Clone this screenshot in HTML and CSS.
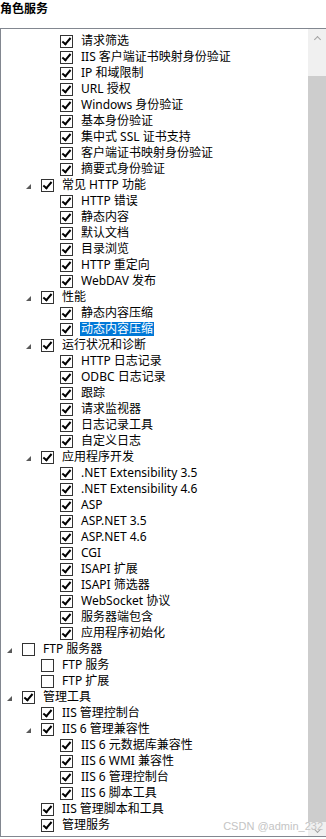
FILE: index.html
```html
<!DOCTYPE html>
<html>
 <head>
  <meta charset="utf-8">
  <link rel="stylesheet" href="styles.css">
 </head>
 <body>
  <div class="title">角色服务</div>
  <div class="box">
   <ul class="tree">
    <li class="row l3"><span class="cb on"></span><span class="lbl">请求筛选</span></li>
    <li class="row l3"><span class="cb on"></span><span class="lbl">IIS 客户端证书映射身份验证</span></li>
    <li class="row l3"><span class="cb on"></span><span class="lbl">IP 和域限制</span></li>
    <li class="row l3"><span class="cb on"></span><span class="lbl">URL 授权</span></li>
    <li class="row l3"><span class="cb on"></span><span class="lbl">Windows 身份验证</span></li>
    <li class="row l3"><span class="cb on"></span><span class="lbl">基本身份验证</span></li>
    <li class="row l3"><span class="cb on"></span><span class="lbl">集中式 SSL 证书支持</span></li>
    <li class="row l3"><span class="cb on"></span><span class="lbl">客户端证书映射身份验证</span></li>
    <li class="row l3"><span class="cb on"></span><span class="lbl">摘要式身份验证</span></li>
    <li class="row l2"><span class="tw"></span><span class="cb on"></span><span class="lbl">常见 HTTP 功能</span></li>
    <li class="row l3"><span class="cb on"></span><span class="lbl">HTTP 错误</span></li>
    <li class="row l3"><span class="cb on"></span><span class="lbl">静态内容</span></li>
    <li class="row l3"><span class="cb on"></span><span class="lbl">默认文档</span></li>
    <li class="row l3"><span class="cb on"></span><span class="lbl">目录浏览</span></li>
    <li class="row l3"><span class="cb on"></span><span class="lbl">HTTP 重定向</span></li>
    <li class="row l3"><span class="cb on"></span><span class="lbl">WebDAV 发布</span></li>
    <li class="row l2"><span class="tw"></span><span class="cb on"></span><span class="lbl">性能</span></li>
    <li class="row l3"><span class="cb on"></span><span class="lbl">静态内容压缩</span></li>
    <li class="row l3"><span class="cb on"></span><span class="lbl sel">动态内容压缩</span></li>
    <li class="row l2"><span class="tw"></span><span class="cb on"></span><span class="lbl">运行状况和诊断</span></li>
    <li class="row l3"><span class="cb on"></span><span class="lbl">HTTP 日志记录</span></li>
    <li class="row l3"><span class="cb on"></span><span class="lbl">ODBC 日志记录</span></li>
    <li class="row l3"><span class="cb on"></span><span class="lbl">跟踪</span></li>
    <li class="row l3"><span class="cb on"></span><span class="lbl">请求监视器</span></li>
    <li class="row l3"><span class="cb on"></span><span class="lbl">日志记录工具</span></li>
    <li class="row l3"><span class="cb on"></span><span class="lbl">自定义日志</span></li>
    <li class="row l2"><span class="tw"></span><span class="cb on"></span><span class="lbl">应用程序开发</span></li>
    <li class="row l3"><span class="cb on"></span><span class="lbl">.NET Extensibility 3.5</span></li>
    <li class="row l3"><span class="cb on"></span><span class="lbl">.NET Extensibility 4.6</span></li>
    <li class="row l3"><span class="cb on"></span><span class="lbl">ASP</span></li>
    <li class="row l3"><span class="cb on"></span><span class="lbl">ASP.NET 3.5</span></li>
    <li class="row l3"><span class="cb on"></span><span class="lbl">ASP.NET 4.6</span></li>
    <li class="row l3"><span class="cb on"></span><span class="lbl">CGI</span></li>
    <li class="row l3"><span class="cb on"></span><span class="lbl">ISAPI 扩展</span></li>
    <li class="row l3"><span class="cb on"></span><span class="lbl">ISAPI 筛选器</span></li>
    <li class="row l3"><span class="cb on"></span><span class="lbl">WebSocket 协议</span></li>
    <li class="row l3"><span class="cb on"></span><span class="lbl">服务器端包含</span></li>
    <li class="row l3"><span class="cb on"></span><span class="lbl">应用程序初始化</span></li>
    <li class="row l1"><span class="tw"></span><span class="cb"></span><span class="lbl">FTP 服务器</span></li>
    <li class="row l2"><span class="cb"></span><span class="lbl">FTP 服务</span></li>
    <li class="row l2"><span class="cb"></span><span class="lbl">FTP 扩展</span></li>
    <li class="row l1"><span class="tw"></span><span class="cb on"></span><span class="lbl">管理工具</span></li>
    <li class="row l2"><span class="cb on"></span><span class="lbl">IIS 管理控制台</span></li>
    <li class="row l2"><span class="tw"></span><span class="cb on"></span><span class="lbl">IIS 6 管理兼容性</span></li>
    <li class="row l3"><span class="cb on"></span><span class="lbl">IIS 6 元数据库兼容性</span></li>
    <li class="row l3"><span class="cb on"></span><span class="lbl">IIS 6 WMI 兼容性</span></li>
    <li class="row l3"><span class="cb on"></span><span class="lbl">IIS 6 管理控制台</span></li>
    <li class="row l3"><span class="cb on"></span><span class="lbl">IIS 6 脚本工具</span></li>
    <li class="row l2"><span class="cb on"></span><span class="lbl">IIS 管理脚本和工具</span></li>
    <li class="row l2"><span class="cb on"></span><span class="lbl">管理服务</span></li>
   </ul>
   <div class="sbar">
    <div class="sb-btn up"></div>
    <div class="sb-track"></div>
    <div class="sb-thumb"></div>
    <div class="sb-btn down"></div>
   </div>
   <div class="mark">CSDN @admin_232</div>
  </div>
 </body>
</html>
```

FILE: styles.css
```css
body {
  margin: 0;
  overflow: hidden;
  background: #fff;
  color: #000;
  font-family: 'Noto Sans', 'Noto Sans CJK SC', sans-serif;
  font-size: 12px;
}
.title {
  height: 28px;
  line-height: 18px;
  font-weight: bold;
}

.box {
  position: relative;
  display: flex;
  width: 326px;
  height: 807px;
  border: 1px solid #828790;
  border-right: none;
  box-sizing: content-box;
}
.tree {
  flex: 1;
  list-style: none;
  margin: 0;
  padding: 4px 0 0 0;
  overflow: hidden;
}

.row {
  display: flex;
  align-items: center;
  height: 16px;
  white-space: nowrap;
}
.l1 { padding-left: 21px; }
.l2 { padding-left: 40px; }
.l3 { padding-left: 59px; }

/* expanded arrow sits to the left of the checkbox */
.tw {
  width: 0;
  height: 0;
  margin-left: -15px;
  margin-right: 10px;
  margin-top: 3px;
  border-left: 5px solid transparent;
  border-bottom: 5px solid #595959;
}

.cb {
  position: relative;
  flex: none;
  width: 11px;
  height: 11px;
  border: 1px solid #333;
  background: #fff;
}
.cb.on::after {
  content: "";
  position: absolute;
  left: 3px;
  top: 0px;
  width: 3px;
  height: 7px;
  border: solid #000;
  border-width: 0 2px 2px 0;
  transform: rotate(40deg);
}
.lbl {
  margin-left: 8px;
  line-height: 16px;
}
.sel {
  background: #0078d7;
  color: #fff;
  line-height: 14px;
  height: 14px;
  padding: 0 1px;
  margin-left: 7px;
}

.sbar {
  flex: none;
  width: 19px;
  display: flex;
  flex-direction: column;
  background: #f0f0f0;
}
.sb-btn {
  position: relative;
  height: 17px;
}
.sb-btn::after {
  content: "";
  position: absolute;
  left: 7px;
  width: 4px;
  height: 4px;
  border: solid #a3a3a3;
  border-width: 1px 0 0 1px;
}
.up::after {
  top: 8px;
  transform: rotate(45deg);
}
.down::after {
  top: 5px;
  transform: rotate(225deg);
}
.sb-track { height: 30px; }
.sb-thumb {
  height: 746px;
  background: #cdcdcd;
}
.down { flex: 1; }

.mark {
  position: absolute;
  right: 4px;
  bottom: 4px;
  font-family: 'Liberation Sans', sans-serif;
  font-size: 11px;
  color: #c4c4c4;
}
```
